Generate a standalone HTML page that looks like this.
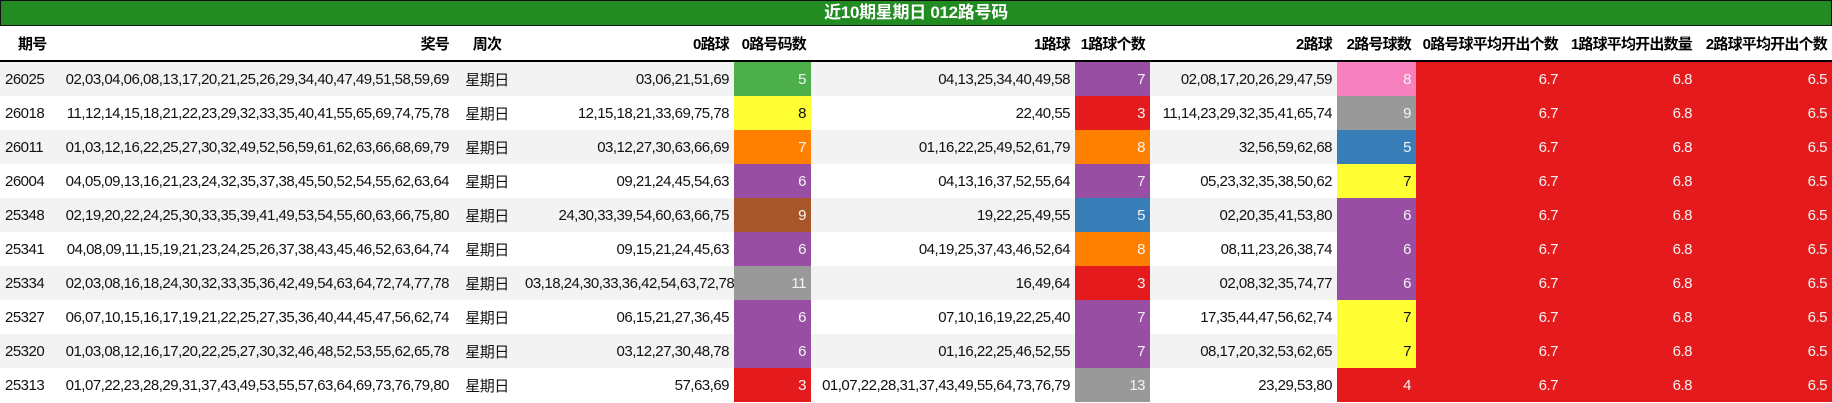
<!DOCTYPE html>
<html><head><meta charset="utf-8"><style>
body{margin:0;width:1832px;height:403px;background:#fff;overflow:hidden;font-family:"Liberation Sans","Noto Sans CJK SC",sans-serif;}
.title{height:24px;background:#228b22;border:1px solid #111;color:#fff;font-weight:bold;font-size:17px;line-height:24px;text-align:center;letter-spacing:-0.3px;}
table{border-collapse:collapse;table-layout:fixed;width:1832px;font-size:15px;letter-spacing:-0.5px;}
th{height:34px;font-weight:bold;font-size:15px;border-bottom:2px solid #000;padding:0 5px;white-space:nowrap;letter-spacing:-0.8px;}
td{height:34px;padding:0 5px;white-space:nowrap;color:#111;}
tr.g td{background:#f3f3f3;}
.r{text-align:right}.c{text-align:center}.l{text-align:left}
td.w{color:#f4f4f4}
.G{background:#4daf4a!important}.Y{background:#ffff33!important;color:#111!important}.O{background:#ff7f00!important}.P{background:#984ea3!important}.B{background:#a65628!important}.U{background:#377eb8!important}.S{background:#999!important}.R{background:#e41a1c!important}.K{background:#f781bf!important}
</style></head><body>
<div class="title">近10期星期日 012路号码</div>
<table>
<colgroup><col style="width:52px"><col style="width:402px"><col style="width:66px"><col style="width:214px"><col style="width:77px"><col style="width:264px"><col style="width:75px"><col style="width:187px"><col style="width:79px"><col style="width:147px"><col style="width:134px"><col style="width:135px"></colgroup>
<tr><th class="l" style="padding-left:18px">期号</th><th class="r">奖号</th><th class="c">周次</th><th class="r">0路球</th><th class="r">0路号码数</th><th class="r">1路球</th><th class="r">1路球个数</th><th class="r">2路球</th><th class="r">2路号球数</th><th class="r">0路号球平均开出个数</th><th class="r">1路球平均开出数量</th><th class="r">2路球平均开出个数</th></tr>
<tr class="g"><td>26025</td><td class="r">02,03,04,06,08,13,17,20,21,25,26,29,34,40,47,49,51,58,59,69</td><td class="c">星期日</td><td class="r">03,06,21,51,69</td><td class="r w G">5</td><td class="r">04,13,25,34,40,49,58</td><td class="r w P">7</td><td class="r">02,08,17,20,26,29,47,59</td><td class="r w K">8</td><td class="r w R">6.7</td><td class="r w R">6.8</td><td class="r w R">6.5</td></tr>
<tr><td>26018</td><td class="r">11,12,14,15,18,21,22,23,29,32,33,35,40,41,55,65,69,74,75,78</td><td class="c">星期日</td><td class="r">12,15,18,21,33,69,75,78</td><td class="r w Y">8</td><td class="r">22,40,55</td><td class="r w R">3</td><td class="r">11,14,23,29,32,35,41,65,74</td><td class="r w S">9</td><td class="r w R">6.7</td><td class="r w R">6.8</td><td class="r w R">6.5</td></tr>
<tr class="g"><td>26011</td><td class="r">01,03,12,16,22,25,27,30,32,49,52,56,59,61,62,63,66,68,69,79</td><td class="c">星期日</td><td class="r">03,12,27,30,63,66,69</td><td class="r w O">7</td><td class="r">01,16,22,25,49,52,61,79</td><td class="r w O">8</td><td class="r">32,56,59,62,68</td><td class="r w U">5</td><td class="r w R">6.7</td><td class="r w R">6.8</td><td class="r w R">6.5</td></tr>
<tr><td>26004</td><td class="r">04,05,09,13,16,21,23,24,32,35,37,38,45,50,52,54,55,62,63,64</td><td class="c">星期日</td><td class="r">09,21,24,45,54,63</td><td class="r w P">6</td><td class="r">04,13,16,37,52,55,64</td><td class="r w P">7</td><td class="r">05,23,32,35,38,50,62</td><td class="r w Y">7</td><td class="r w R">6.7</td><td class="r w R">6.8</td><td class="r w R">6.5</td></tr>
<tr class="g"><td>25348</td><td class="r">02,19,20,22,24,25,30,33,35,39,41,49,53,54,55,60,63,66,75,80</td><td class="c">星期日</td><td class="r">24,30,33,39,54,60,63,66,75</td><td class="r w B">9</td><td class="r">19,22,25,49,55</td><td class="r w U">5</td><td class="r">02,20,35,41,53,80</td><td class="r w P">6</td><td class="r w R">6.7</td><td class="r w R">6.8</td><td class="r w R">6.5</td></tr>
<tr><td>25341</td><td class="r">04,08,09,11,15,19,21,23,24,25,26,37,38,43,45,46,52,63,64,74</td><td class="c">星期日</td><td class="r">09,15,21,24,45,63</td><td class="r w P">6</td><td class="r">04,19,25,37,43,46,52,64</td><td class="r w O">8</td><td class="r">08,11,23,26,38,74</td><td class="r w P">6</td><td class="r w R">6.7</td><td class="r w R">6.8</td><td class="r w R">6.5</td></tr>
<tr class="g"><td>25334</td><td class="r">02,03,08,16,18,24,30,32,33,35,36,42,49,54,63,64,72,74,77,78</td><td class="c">星期日</td><td class="r">03,18,24,30,33,36,42,54,63,72,78</td><td class="r w S">11</td><td class="r">16,49,64</td><td class="r w R">3</td><td class="r">02,08,32,35,74,77</td><td class="r w P">6</td><td class="r w R">6.7</td><td class="r w R">6.8</td><td class="r w R">6.5</td></tr>
<tr><td>25327</td><td class="r">06,07,10,15,16,17,19,21,22,25,27,35,36,40,44,45,47,56,62,74</td><td class="c">星期日</td><td class="r">06,15,21,27,36,45</td><td class="r w P">6</td><td class="r">07,10,16,19,22,25,40</td><td class="r w P">7</td><td class="r">17,35,44,47,56,62,74</td><td class="r w Y">7</td><td class="r w R">6.7</td><td class="r w R">6.8</td><td class="r w R">6.5</td></tr>
<tr class="g"><td>25320</td><td class="r">01,03,08,12,16,17,20,22,25,27,30,32,46,48,52,53,55,62,65,78</td><td class="c">星期日</td><td class="r">03,12,27,30,48,78</td><td class="r w P">6</td><td class="r">01,16,22,25,46,52,55</td><td class="r w P">7</td><td class="r">08,17,20,32,53,62,65</td><td class="r w Y">7</td><td class="r w R">6.7</td><td class="r w R">6.8</td><td class="r w R">6.5</td></tr>
<tr><td>25313</td><td class="r">01,07,22,23,28,29,31,37,43,49,53,55,57,63,64,69,73,76,79,80</td><td class="c">星期日</td><td class="r">57,63,69</td><td class="r w R">3</td><td class="r">01,07,22,28,31,37,43,49,55,64,73,76,79</td><td class="r w S">13</td><td class="r">23,29,53,80</td><td class="r w R">4</td><td class="r w R">6.7</td><td class="r w R">6.8</td><td class="r w R">6.5</td></tr>
</table>
</body></html>
